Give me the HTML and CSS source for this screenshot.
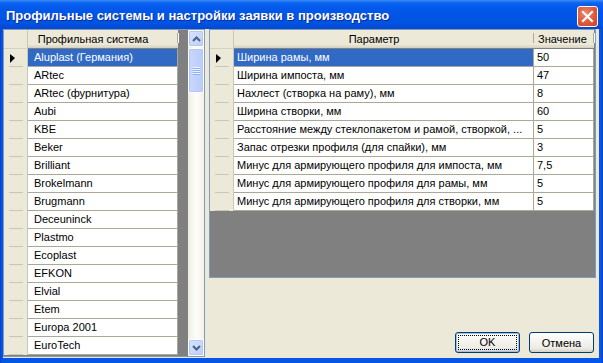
FILE: index.html
```html
<!DOCTYPE html>
<html lang="ru">
<head>
  <meta charset="UTF-8" />
  <title>Профильные системы и настройки заявки в производство</title>
  <link rel="stylesheet" href="styles.css">
</head>
<body>
  <div class="window">
    <!-- Заголовок окна -->
    <div class="titlebar">
      <span class="title">Профильные системы и настройки заявки в производство</span>
      <span class="close-btn">
        <svg width="13" height="13" viewBox="0 0 13 13"><path d="M2 2 L11 11 M11 2 L2 11" stroke="#fff" stroke-width="2.2" stroke-linecap="square"/></svg>
      </span>
    </div>

    <div class="client">
      <!-- Список профильных систем -->
      <div class="grid grid-left">
        <div class="grid-body">
          <div class="grid-head">
            <div class="rh"></div>
            <div class="hc hc-system">Профильная система</div>
          </div>
          <div class="row selected"><div class="rh"><span class="arrow"></span></div><div class="c c-system">Aluplast (Германия)</div></div>
          <div class="row"><div class="rh"></div><div class="c c-system">ARtec</div></div>
          <div class="row"><div class="rh"></div><div class="c c-system">ARtec (фурнитура)</div></div>
          <div class="row"><div class="rh"></div><div class="c c-system">Aubi</div></div>
          <div class="row"><div class="rh"></div><div class="c c-system">KBE</div></div>
          <div class="row"><div class="rh"></div><div class="c c-system">Beker</div></div>
          <div class="row"><div class="rh"></div><div class="c c-system">Brilliant</div></div>
          <div class="row"><div class="rh"></div><div class="c c-system">Brokelmann</div></div>
          <div class="row"><div class="rh"></div><div class="c c-system">Brugmann</div></div>
          <div class="row"><div class="rh"></div><div class="c c-system">Deceuninck</div></div>
          <div class="row"><div class="rh"></div><div class="c c-system">Plastmo</div></div>
          <div class="row"><div class="rh"></div><div class="c c-system">Ecoplast</div></div>
          <div class="row"><div class="rh"></div><div class="c c-system">EFKON</div></div>
          <div class="row"><div class="rh"></div><div class="c c-system">Elvial</div></div>
          <div class="row"><div class="rh"></div><div class="c c-system">Etem</div></div>
          <div class="row"><div class="rh"></div><div class="c c-system">Europa 2001</div></div>
          <div class="row"><div class="rh"></div><div class="c c-system">EuroTech</div></div>
        </div>

        <div class="vscroll">
          <div class="sb-btn">
            <svg width="9" height="6" viewBox="0 0 9 6"><path d="M1 5 L4.5 1.5 L8 5" fill="none" stroke="#4d6185" stroke-width="2"/></svg>
          </div>
          <div class="sb-thumb"></div>
          <div class="sb-track"></div>
          <div class="sb-btn">
            <svg width="9" height="6" viewBox="0 0 9 6"><path d="M1 1 L4.5 4.5 L8 1" fill="none" stroke="#4d6185" stroke-width="2"/></svg>
          </div>
        </div>
      </div>

      <!-- Параметры выбранной системы -->
      <div class="right-panel">
        <div class="grid grid-right">
          <div class="grid-body">
            <div class="grid-head">
              <div class="rh"></div>
              <div class="hc hc-param">Параметр</div>
              <div class="hc hc-value">Значение</div>
            </div>
            <div class="row selected"><div class="rh"><span class="arrow"></span></div><div class="c c-param">Ширина рамы, мм</div><div class="c c-value">50</div></div>
            <div class="row"><div class="rh"></div><div class="c c-param">Ширина импоста, мм</div><div class="c c-value">47</div></div>
            <div class="row"><div class="rh"></div><div class="c c-param">Нахлест (створка на раму), мм</div><div class="c c-value">8</div></div>
            <div class="row"><div class="rh"></div><div class="c c-param">Ширина створки, мм</div><div class="c c-value">60</div></div>
            <div class="row"><div class="rh"></div><div class="c c-param">Расстояние между стеклопакетом и рамой, створкой, ...</div><div class="c c-value">5</div></div>
            <div class="row"><div class="rh"></div><div class="c c-param">Запас отрезки профиля (для спайки), мм</div><div class="c c-value">3</div></div>
            <div class="row"><div class="rh"></div><div class="c c-param">Минус для армирующего профиля для импоста, мм</div><div class="c c-value">7,5</div></div>
            <div class="row"><div class="rh"></div><div class="c c-param">Минус для армирующего профиля для рамы, мм</div><div class="c c-value">5</div></div>
            <div class="row"><div class="rh"></div><div class="c c-param">Минус для армирующего профиля для створки, мм</div><div class="c c-value">5</div></div>
          </div>
        </div>

        <div class="buttons">
          <button class="btn btn-default"><span>OK</span></button>
          <button class="btn"><span>Отмена</span></button>
        </div>
      </div>
    </div>
  </div>
</body>
</html>
```

FILE: styles.css
```css
body {
  margin: 0;
  font-family: "Liberation Sans", Arial, sans-serif;
  font-size: 11px;
  color: #000;
}

/* Окно в стиле XP */
.window {
  width: 603px;
  height: 363px;
  display: flex;
  flex-direction: column;
  background: linear-gradient(to right, #0a3fc8, #0655e6 2px, #0655e6 calc(100% - 2px), #0a3fc8);
}

.titlebar {
  height: 29px;
  flex-shrink: 0;
  display: flex;
  align-items: center;
  justify-content: space-between;
  padding: 0 5px 0 6px;
  background: linear-gradient(to bottom, #3d8cf7 0, #0a63f0 3px, #0259eb 8px, #0055e5 16px, #0153e1 24px, #0546cf 29px);
}

.title {
  color: #fff;
  font-weight: bold;
  font-size: 13px;
  text-shadow: 1px 1px 0 #0b2b97;
  margin-top: 1px;
}

.close-btn {
  width: 21px;
  height: 21px;
  box-sizing: border-box;
  border: 1px solid #fff;
  border-radius: 3px;
  display: flex;
  align-items: center;
  justify-content: center;
  background: radial-gradient(circle at 40% 35%, #e98b6c 0, #e0583a 55%, #c9432a 100%);
  margin-top: 3px;
}

.client {
  flex: 1;
  margin: 0 4px 5px 3px;
  background: #ece9d8;
  display: flex;
  gap: 4px;
}

/* Таблицы */
.grid {
  border: 1px solid #7f9db9;
  background: #808080;
  display: flex;
}

.grid-left {
  width: 200px;
  height: 326px;
}

.grid-body {
  flex: 1;
  overflow: hidden;
}

.grid-head,
.row {
  display: flex;
}

.grid-head {
  height: 19px;
}

.rh {
  width: 23px;
  height: 18px;
  flex-shrink: 0;
  border-right: 1px solid #cbc7b8;
  background-color: #ece9d8;
  background-image: linear-gradient(#cbc7b8, #cbc7b8);
  background-repeat: no-repeat;
  background-size: 14px 1px;
  background-position: 5px 100%;
  box-sizing: content-box;
  display: flex;
  align-items: center;
}

.grid-head .rh {
  height: 18px;
  border-bottom: 1px solid #d6d2c2;
  background-image: none;
}

.hc {
  height: 18px;
  line-height: 18px;
  background: #ece9d8;
  border-bottom: 1px solid #d6d2c2;
  box-shadow: inset 0 -2px 0 #e2decd;
  position: relative;
  white-space: nowrap;
}

/* разделитель в заголовке */
.hc::after {
  content: "";
  position: absolute;
  right: 0;
  top: 3px;
  bottom: 4px;
  width: 1px;
  background: #aca899;
  box-shadow: 1px 0 0 #fff;
}

.c {
  height: 17px;
  line-height: 17px;
  background: #fff;
  border-right: 1px solid #aca899;
  border-bottom: 1px solid #aca899;
  white-space: nowrap;
  overflow: hidden;
}

.row.selected .c-system,
.row.selected .c-param {
  background: #316ac5;
  color: #fff;
}

.arrow {
  width: 0;
  height: 0;
  margin-left: 6px;
  border-left: 5px solid #000;
  border-top: 4px solid transparent;
  border-bottom: 5px solid transparent;
}

.hc-system {
  width: 150px;
  text-align: center;
  padding-right: 20px;
  box-sizing: border-box;
}

.c-system {
  width: 143px;
  padding-left: 6px;
}

.hc-param {
  width: 300px;
  text-align: center;
  padding-right: 20px;
  box-sizing: border-box;
}

.c-param {
  width: 296px;
  padding-left: 3px;
}

.hc-value {
  width: 60px;
  padding-left: 4px;
  box-sizing: border-box;
}

.c-value {
  width: 56px;
  padding-left: 3px;
}

/* Вертикальная прокрутка */
.vscroll {
  width: 16px;
  display: flex;
  flex-direction: column;
  background: linear-gradient(to right, #eeede5, #fdfdfa 50%, #f3f1ec);
}

.sb-btn {
  height: 17px;
  box-sizing: border-box;
  border: 1px solid #fff;
  border-radius: 2px;
  background: linear-gradient(to bottom right, #d8e4fd, #bccefa);
  box-shadow: inset 0 0 0 1px #b5c8f3;
  display: flex;
  align-items: center;
  justify-content: center;
}

.sb-thumb {
  height: 45px;
  margin-top: 1px;
  box-sizing: border-box;
  border: 1px solid #fff;
  border-radius: 2px;
  background: linear-gradient(to right, #c9d8fc, #b8cbf9);
  box-shadow: inset 0 0 0 1px #b5c8f3;
  display: flex;
  align-items: center;
  justify-content: center;
}

.sb-thumb::after {
  content: "";
  width: 7px;
  height: 8px;
  background: repeating-linear-gradient(#eef4fe 0 1px, #8cb0f8 1px 2px);
}

.sb-track {
  flex: 1;
}

/* Правая часть */
.right-panel {
  flex: 1;
  display: flex;
  flex-direction: column;
}

.grid-right {
  width: 385px;
  height: 247px;
}

.buttons {
  margin-top: auto;
  display: flex;
  justify-content: flex-end;
  gap: 9px;
  padding: 0 5px 5px 0;
}

.btn {
  width: 65px;
  height: 21px;
  padding: 0;
  border: 1px solid #003c74;
  border-radius: 3px;
  background: linear-gradient(to bottom, #fff 0, #f6f5f0 40%, #ecebe4 80%, #d6d0c5 100%);
  font-family: "Liberation Sans", Arial, sans-serif;
  font-size: 11px;
  color: #000;
  display: flex;
  align-items: center;
  justify-content: center;
}

.btn-default {
  box-shadow: inset 0 0 0 1px #a6bde8;
}

.btn-default span {
  width: 57px;
  height: 13px;
  line-height: 13px;
  border: 1px dotted #000;
}
```
